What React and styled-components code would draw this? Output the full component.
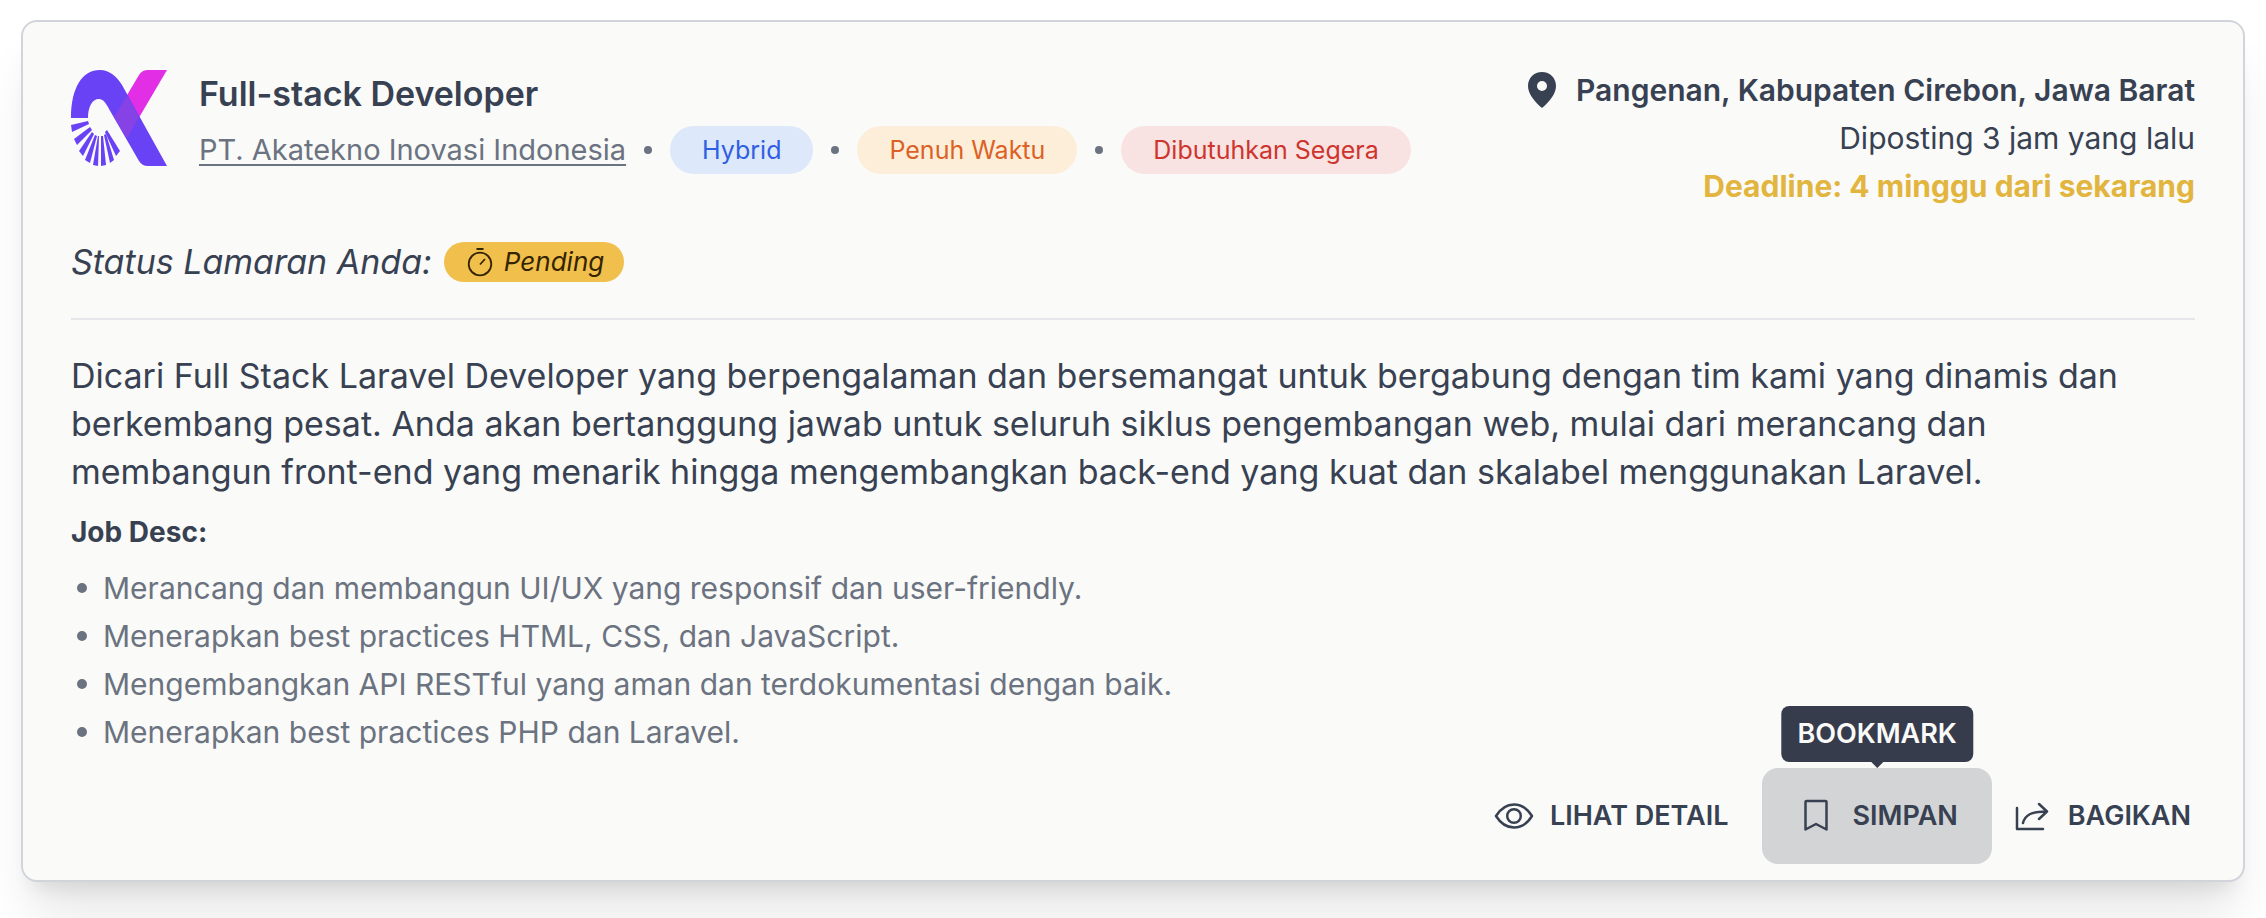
import React from "react";
import styled, { createGlobalStyle } from "styled-components";

const GlobalStyle = createGlobalStyle`
  *, *::before, *::after { box-sizing: border-box; }
  body {
    margin: 0;
    background: #ffffff;
    color: #374151;
    font-family: Inter, "Liberation Sans", sans-serif;
    font-size: 30px;
    line-height: 40px;
  }
  p, h2, h3, ul { margin: 0; padding: 0; }
`;

const Page = styled.main`
  padding: 20px 21px 36px;
`;

const Card = styled.article`
  padding: 48px 48px 16px;
  border: 2px solid #d1d5db;
  border-radius: 16px;
  background: #fafaf9;
  box-shadow: 0 40px 50px -10px rgba(0, 0, 0, 0.1),
    0 16px 20px -12px rgba(0, 0, 0, 0.1);
`;

const Header = styled.header`
  display: flex;
  justify-content: space-between;
  gap: 32px;
`;

const Identity = styled.div`
  display: flex;
  align-items: flex-start;
  gap: 32px;
`;

const Summary = styled.div`
  display: flex;
  flex-direction: column;
  gap: 8px;
`;

const Title = styled.h2`
  font-size: 34px;
  line-height: 48px;
  font-weight: 600;
`;

const Tags = styled.div`
  display: flex;
  align-items: center;
  gap: 18px;
`;

const Company = styled.a`
  font-size: 29px;
  color: #6b7280;
  text-decoration: underline;
  text-decoration-thickness: 2px;
  text-underline-offset: 4px;
`;

const Dot = styled.span`
  width: 8px;
  height: 8px;
  border-radius: 50%;
  background: #6b7280;
`;

const pillTones = {
  blue: { ink: "#2f5fe3", fill: "#dde8fb" },
  orange: { ink: "#dc6126", fill: "#fdeed9" },
  red: { ink: "#cd352d", fill: "#f9e2e2" },
};

const Pill = styled.span`
  padding: 0 32px;
  border-radius: 24px;
  font-size: 25px;
  line-height: 48px;
  color: ${({ $tone }) => pillTones[$tone].ink};
  background: ${({ $tone }) => pillTones[$tone].fill};
`;

const Meta = styled.div`
  display: flex;
  flex-direction: column;
  align-items: flex-end;
  gap: 8px;
`;

const Location = styled.p`
  display: flex;
  align-items: center;
  gap: 20px;
  font-weight: 600;
`;

const Deadline = styled.p`
  font-weight: 700;
  color: #e2b53e;
`;

const Status = styled.div`
  display: flex;
  align-items: center;
  gap: 12px;
  margin-top: 32px;
  padding-bottom: 32px;
  border-bottom: 2px solid #e5e7eb;
  font-size: 34px;
  line-height: 48px;
  font-style: italic;
`;

const Badge = styled.span`
  display: flex;
  align-items: center;
  gap: 8px;
  padding: 0 20px;
  border-radius: 20px;
  font-size: 26px;
  line-height: 40px;
  color: #342400;
  background: #f1bf4b;
`;

const Description = styled.p`
  margin-top: 32px;
  padding-right: 24px;
  font-size: 34px;
  line-height: 48px;
`;

const ListTitle = styled.h3`
  margin-top: 16px;
  font-size: 28px;
  font-weight: 700;
`;

const Duties = styled.ul`
  display: flex;
  flex-direction: column;
  gap: 8px;
  margin-top: 16px;
  color: #6b7280;
  list-style: none;
`;

const Duty = styled.li`
  display: flex;
  align-items: center;
  gap: 16px;
  padding-left: 6px;

  &::before {
    content: "";
    width: 10px;
    height: 10px;
    border-radius: 50%;
    background: currentColor;
  }
`;

const Actions = styled.footer`
  display: flex;
  justify-content: flex-end;
  gap: 20px;
  margin-top: 16px;
  padding-right: 4px;
`;

const Action = styled.button`
  position: relative;
  display: flex;
  align-items: center;
  gap: 16px;
  height: 96px;
  padding: ${({ $active }) => ($active ? "0 34px" : "0")};
  border: 0;
  border-radius: 16px;
  background: ${({ $active }) => ($active ? "#d3d4d6" : "transparent")};
  color: inherit;
  font: inherit;
  font-size: 27px;
  font-weight: 600;
  text-transform: uppercase;
  cursor: pointer;

  &:first-child {
    padding-right: 14px;
  }
`;

const Tooltip = styled.span`
  position: absolute;
  bottom: calc(100% + 6px);
  left: 50%;
  transform: translateX(-50%);
  padding: 8px 16px;
  border-radius: 8px;
  background: #363c4c;
  color: #fafaf9;

  &::after {
    content: "";
    position: absolute;
    top: 100%;
    left: 50%;
    margin-left: -6px;
    border: 6px solid transparent;
    border-top-color: #363c4c;
    border-bottom-width: 0;
  }
`;

function Logo() {
  return (
    <svg width="96" height="96" viewBox="0 0 96 96" role="img" aria-label="Akatekno">
      <path fill="#e22fe6" d="M96 0H77Q71 0 68 5L43 47L56 68Z" />
      <path
        fill="#6a42f5"
        d="M0 48C0 18 11 0 29 0C39 0 46 7 51 15L96 96H77Q71 96 68 91L38 39C35 33 32 29 28 29C21 29 17 37 17 48Z"
      />
      <path fill="#8742e6" d="M56 26L68 47L56 68L43 47Z" />
      <g fill="#6a42f5">
        <path d="M0 55L17 51L18 54L1 62Z" />
        <path d="M3 69L19 57L21 60L6 75Z" />
        <path d="M8 81L21 62L23 64L12 86Z" />
        <path d="M14 90L24 65L26 66L19 93Z" />
        <path d="M22 95L27 66L28 66L27 96Z" />
        <path d="M30 66H32L35 95L30 96Z" />
        <path d="M33 65L35 64L43 90L39 93Z" />
        <path d="M34 62L36 60L49 81L45 86Z" />
      </g>
    </svg>
  );
}

function PinIcon() {
  return (
    <svg width="28" height="36" viewBox="0 0 28 36" aria-hidden="true">
      <path
        fill="currentColor"
        fillRule="evenodd"
        d="M14 0C6 0 0 6 0 14C0 22 7 30 14 36C21 30 28 22 28 14C28 6 22 0 14 0ZM14 9A5 5 0 1 1 14 19A5 5 0 1 1 14 9Z"
      />
    </svg>
  );
}

const Stroke = styled.svg.attrs({ "aria-hidden": true })`
  fill: none;
  stroke: currentColor;
  stroke-width: ${({ $thin }) => ($thin ? 1.8 : 2.5)};
  stroke-linecap: ${({ $thin }) => ($thin ? "butt" : "round")};
  stroke-linejoin: round;
`;

function TimerIcon() {
  return (
    <Stroke width="32" height="32" viewBox="0 0 32 32" $thin>
      <circle cx="16" cy="18" r="11.3" />
      <path d="M16 18.500L21 13M12.500 3H19.500" />
    </Stroke>
  );
}

function EyeIcon() {
  return (
    <Stroke width="40" height="40" viewBox="0 0 40 40">
      <path d="M2 20C7 12 13 8.500 20 8.500S33 12 38 20C33 28 27 31.500 20 31.500S7 28 2 20Z" />
      <circle cx="20" cy="20" r="6.8" />
    </Stroke>
  );
}

function BookmarkIcon() {
  return (
    <Stroke width="40" height="40" viewBox="0 0 40 40">
      <path d="M9.500 6Q9.500 5 10.500 5H29.500Q30.500 5 30.500 6V33.500L20 28L9.500 33.500Z" />
    </Stroke>
  );
}

function ShareIcon() {
  return (
    <Stroke width="40" height="40" viewBox="0 0 40 40">
      <path d="M5 12V33H31M11 27C13 19 19 15.500 35 15.500M27 8L35 15.500L27 23" />
    </Stroke>
  );
}

const duties = [
  "Merancang dan membangun UI/UX yang responsif dan user-friendly.",
  "Menerapkan best practices HTML, CSS, dan JavaScript.",
  "Mengembangkan API RESTful yang aman dan terdokumentasi dengan baik.",
  "Menerapkan best practices PHP dan Laravel.",
];

export default function App() {
  return (
    <>
      <GlobalStyle />
      <Page>
        <Card>
          <Header>
            <Identity>
              <Logo />
              <Summary>
                <Title>Full-stack Developer</Title>
                <Tags>
                  <Company href="#company">PT. Akatekno Inovasi Indonesia</Company>
                  <Dot />
                  <Pill $tone="blue">Hybrid</Pill>
                  <Dot />
                  <Pill $tone="orange">Penuh Waktu</Pill>
                  <Dot />
                  <Pill $tone="red">Dibutuhkan Segera</Pill>
                </Tags>
              </Summary>
            </Identity>
            <Meta>
              <Location>
                <PinIcon />
                Pangenan, Kabupaten Cirebon, Jawa Barat
              </Location>
              <p>Diposting 3 jam yang lalu</p>
              <Deadline>Deadline: 4 minggu dari sekarang</Deadline>
            </Meta>
          </Header>
          <Status>
            <span>Status Lamaran Anda:</span>
            <Badge>
              <TimerIcon />
              Pending
            </Badge>
          </Status>
          <Description>
            Dicari Full Stack Laravel Developer yang berpengalaman dan bersemangat untuk
            bergabung dengan tim kami yang dinamis dan berkembang pesat. Anda akan
            bertanggung jawab untuk seluruh siklus pengembangan web, mulai dari merancang
            dan membangun front-end yang menarik hingga mengembangkan back-end yang kuat
            dan skalabel menggunakan Laravel.
          </Description>
          <ListTitle>Job Desc:</ListTitle>
          <Duties>
            {duties.map((duty) => (
              <Duty key={duty}>{duty}</Duty>
            ))}
          </Duties>
          <Actions>
            <Action type="button">
              <EyeIcon />
              Lihat Detail
            </Action>
            <Action type="button" $active aria-describedby="bookmark-tip">
              <Tooltip id="bookmark-tip" role="tooltip">Bookmark</Tooltip>
              <BookmarkIcon />
              Simpan
            </Action>
            <Action type="button">
              <ShareIcon />
              Bagikan
            </Action>
          </Actions>
        </Card>
      </Page>
    </>
  );
}
